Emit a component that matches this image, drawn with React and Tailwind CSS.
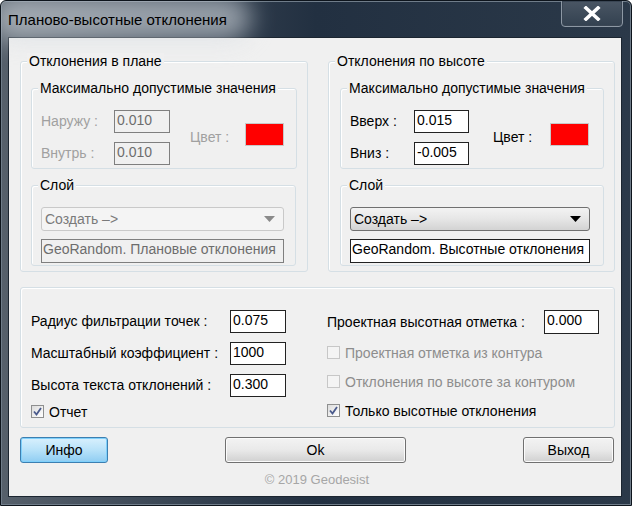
import React from 'react';

const FONT = { fontFamily: '"Liberation Sans", Arial, sans-serif' };

function GroupBox({ label, className = '', children }) {
  return (
    <div className={`relative border border-[#d5dfe5] rounded-[3px] shadow-[inset_1px_1px_0_#ffffff] ${className}`}>
      {label && (
        <span className="absolute -top-[9px] left-[6px] px-[2px] bg-[#f0f0f0] text-[14px] leading-[16px] text-black whitespace-nowrap">
          {label}
        </span>
      )}
      {children}
    </div>
  );
}

function TextBox({ value, disabled, className = '' }) {
  return (
    <div
      className={`border pl-[2px] pt-[1px] text-[14px] leading-[17px] whitespace-nowrap overflow-hidden ${
        disabled ? 'border-[#7f7f7f] bg-[#f0f0f0] text-[#6d6d6d]' : 'border-[#222222] bg-white text-black'
      } ${className}`}
    >
      {value}
    </div>
  );
}

function Combo({ disabled, className = '' }) {
  return (
    <div
      className={`flex items-center justify-between rounded-[3px] border pl-[3px] pr-[8px] text-[14px] ${
        disabled
          ? 'border-[#c9c9c9] bg-[#f4f4f4] text-[#7a7a7a]'
          : 'border-[#707070] bg-gradient-to-b from-[#f3f3f3] via-[#e6e6e6] to-[#d3d3d3] text-black'
      } ${className}`}
    >
      <span>Создать –&gt;</span>
      <svg width="11" height="6" viewBox="0 0 11 6">
        <path d="M0 0 L11 0 L5.5 6 Z" fill={disabled ? '#8a8a8a' : '#000'} />
      </svg>
    </div>
  );
}

function CheckBox({ checked, disabled, label }) {
  return (
    <div className="flex items-center h-[17px]">
      <div
        className={`w-[13px] h-[13px] border flex items-center justify-center ${
          disabled
            ? 'border-[#c7c7c7] bg-[#f4f4f4]'
            : 'border-[#8e8f8f] bg-gradient-to-br from-[#dcdcdc] to-[#ffffff]'
        }`}
      >
        {checked && (
          <svg width="9" height="9" viewBox="0 0 9 9">
            <path d="M1 4.5 L3.5 7.5 L8 1" stroke="#4a5a8c" strokeWidth="1.8" fill="none" />
          </svg>
        )}
      </div>
      <span className={`ml-[5px] text-[14px] leading-[16px] ${disabled ? 'text-[#8d8d8d]' : 'text-black'}`}>
        {label}
      </span>
    </div>
  );
}

function Button({ children, primary, className = '' }) {
  return (
    <div
      className={`h-[26px] flex items-center justify-center rounded-[3px] border text-[14px] ${
        primary
          ? 'border-[#3c7fb1] bg-gradient-to-b from-[#d8f0fd] via-[#b8e2f9] to-[#8fcdf2] shadow-[inset_0_0_0_1px_#7fd0fb]'
          : 'border-[#707070] bg-gradient-to-b from-[#f3f3f3] via-[#e9e9e9] to-[#d0d0d0] shadow-[inset_0_0_0_1px_#fbfbfb]'
      } ${className}`}
    >
      {children}
    </div>
  );
}

function MaxGroup({ disabled, labels, values, labelW, inputW, colorGap, colorW, className }) {
  const txt = disabled ? 'text-[#a0a0a0]' : 'text-black';
  return (
    <GroupBox label="Максимально допустимые значения" className={`h-[81px] pt-[21px] pl-[9px] ${className}`}>
      <div className="flex items-center">
        <div className="flex flex-col gap-[9px]">
          {labels.map((l, i) => (
            <div key={l} className="flex items-center">
              <span className={`text-[14px] ${txt}`} style={{ width: labelW }}>{l}</span>
              <div style={{ width: inputW }}>
                <TextBox value={values[i]} disabled={disabled} className="h-[23px]" />
              </div>
            </div>
          ))}
        </div>
        <span className={`text-[14px] ${txt}`} style={{ marginLeft: colorGap, width: colorW }}>Цвет :</span>
        <div className="w-[39px] h-[23px] bg-[#ff0000] border border-[#c8c8c8] mb-[7px]" />
      </div>
    </GroupBox>
  );
}

function LayerGroup({ disabled, text, width, className }) {
  return (
    <GroupBox label="Слой" className={`h-[81px] mt-[16px] pt-[21px] pl-[9px] ${className}`}>
      <div style={{ width }} className="flex flex-col gap-[8px]">
        <Combo disabled={disabled} className="h-[24px]" />
        <TextBox value={text} disabled={disabled} className="h-[24px] !pl-[1px]" />
      </div>
    </GroupBox>
  );
}

function Row({ label, value, labelW, inputW, h = 'h-[23px]' }) {
  return (
    <div className="flex items-center">
      <span className="text-[14px] text-black whitespace-nowrap" style={{ width: labelW }}>{label}</span>
      <div style={{ width: inputW }}>
        <TextBox value={value} className={h} />
      </div>
    </div>
  );
}

export default function App() {
  return (
    <div
      style={FONT}
      className="relative w-[632px] h-[506px] flex flex-col overflow-hidden rounded-t-[6px] border border-[#0d141c] bg-gradient-to-r from-[#56606b] via-[#223041] to-[#2b3949] shadow-[inset_0_0_0_1px_#6f7c89]"
    >
      {/* title bar */}
      <div className="relative h-[36px] flex items-start justify-between shrink-0">
        <div className="absolute left-[-10px] top-[-6px] w-[260px] h-[46px] rounded-full bg-[#d7dde3] opacity-60 blur-[12px]" />
        <span className="relative ml-[7px] mt-[10px] text-[15px] leading-[18px] text-black">
          Планово-высотные отклонения
        </span>
        <div className="relative mr-[8px] -mt-[1px] w-[62px] h-[27px] rounded-b-[4px] border border-[#8d98a4] bg-gradient-to-b from-[#4a5664] to-[#334150] shadow-[inset_0_0_0_1px_#3a4654] flex items-center justify-center">
          <svg width="18" height="15" viewBox="0 0 18 15">
            <path d="M3 2 L15 13 M15 2 L3 13" stroke="#ffffff" strokeWidth="3.6" strokeLinecap="square" />
          </svg>
        </div>
      </div>

      {/* client area */}
      <div className="ml-[7px] mr-[9px] h-[460px] bg-[#f0f0f0] border border-[#1b2530] pl-[11px] pt-[23px] text-[14px] text-black">
        <div className="flex gap-[20px]">
          {/* left group */}
          <GroupBox label="Отклонения в плане" className="w-[288px] h-[211px] pt-[26px] pl-[10px]">
            <MaxGroup
              disabled
              labels={['Наружу :', 'Внутрь :']}
              values={['0.010', '0.010']}
              labelW={73}
              inputW={56}
              colorGap={20}
              colorW={55}
              className="w-[266px]"
            />
            <LayerGroup disabled text="GeoRandom. Плановые отклонения" width={243} className="w-[265px]" />
          </GroupBox>

          {/* right group */}
          <GroupBox label="Отклонения по высоте" className="w-[287px] h-[211px] pt-[26px] pl-[11px]">
            <MaxGroup
              labels={['Вверх :', 'Вниз :']}
              values={['0.015', '-0.005']}
              labelW={64}
              inputW={55}
              colorGap={24}
              colorW={57}
              className="w-[264px]"
            />
            <LayerGroup text="GeoRandom. Высотные отклонения" width={240} className="w-[264px]" />
          </GroupBox>
        </div>

        {/* bottom group */}
        <GroupBox className="mt-[15px] w-[595px] h-[141px] pt-[22px] pl-[10px] flex">
          <div className="w-[296px] flex flex-col">
            <div className="flex flex-col gap-[9px]">
              <Row label="Радиус фильтрации точек :" value="0.075" labelW={199} inputW={56} />
              <Row label="Масштабный коэффициент :" value="1000" labelW={199} inputW={56} />
              <Row label="Высота текста отклонений :" value="0.300" labelW={199} inputW={56} />
            </div>
            <div className="mt-[6px]">
              <CheckBox checked label="Отчет" />
            </div>
          </div>
          <div className="flex flex-col">
            <Row label="Проектная высотная отметка :" value="0.000" labelW={217} inputW={55} h="h-[24px]" />
            <div className="mt-[10px] flex flex-col gap-[12px]">
              <CheckBox disabled label="Проектная отметка из контура" />
              <CheckBox disabled label="Отклонения по высоте за контуром" />
              <CheckBox checked label="Только высотные отклонения" />
            </div>
          </div>
        </GroupBox>

        {/* buttons */}
        <div className="mt-[9px] w-[594px] flex justify-between">
          <Button primary className="w-[88px]">Инфо</Button>
          <Button className="w-[181px]">Ok</Button>
          <Button className="w-[91px]">Выход</Button>
        </div>

        <div className="mt-[9px] w-[594px] text-center text-[13px] leading-[16px] text-[#a6a6a6]">
          © 2019 Geodesist
        </div>
      </div>
    </div>
  );
}
